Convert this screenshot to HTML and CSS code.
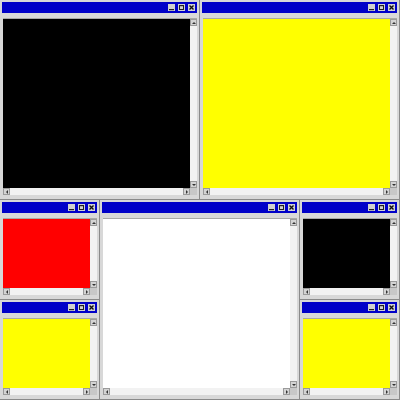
FILE: index.html
```html
<!DOCTYPE html>
<html>
<head>
<meta charset="utf-8">
<link rel="stylesheet" href="styles.css">
</head>
<body>
<div class="desk">
  <div class="win w-big a1">
    <div class="title"><span class="btn"><svg viewBox="0 0 7 7"><rect x="1" y="5" width="5" height="1.2" fill="#222"/></svg></span><span class="btn"><svg viewBox="0 0 7 7"><rect x="1.5" y="1.5" width="4" height="4" fill="none" stroke="#222" stroke-width="1"/><rect x="1" y="1" width="5" height="1.2" fill="#222"/></svg></span><span class="btn"><svg viewBox="0 0 7 7"><path d="M1.5 1.5L5.5 5.5M5.5 1.5L1.5 5.5" stroke="#111" stroke-width="1.4"/></svg></span></div>
    <div class="client"><div class="view black"></div><div class="vs"><span class="arr up"></span><span class="arr dn"></span></div><div class="hs"><span class="arr lf"></span><span class="arr rt"></span></div><div class="corner"></div></div>
  </div>
  <div class="win w-big a2">
    <div class="title"><span class="btn"><svg viewBox="0 0 7 7"><rect x="1" y="5" width="5" height="1.2" fill="#222"/></svg></span><span class="btn"><svg viewBox="0 0 7 7"><rect x="1.5" y="1.5" width="4" height="4" fill="none" stroke="#222" stroke-width="1"/><rect x="1" y="1" width="5" height="1.2" fill="#222"/></svg></span><span class="btn"><svg viewBox="0 0 7 7"><path d="M1.5 1.5L5.5 5.5M5.5 1.5L1.5 5.5" stroke="#111" stroke-width="1.4"/></svg></span></div>
    <div class="client"><div class="view yellow"></div><div class="vs"><span class="arr up"></span><span class="arr dn"></span></div><div class="hs"><span class="arr lf"></span><span class="arr rt"></span></div><div class="corner"></div></div>
  </div>
  <div class="win w-small a3">
    <div class="title"><span class="btn"><svg viewBox="0 0 7 7"><rect x="1" y="5" width="5" height="1.2" fill="#222"/></svg></span><span class="btn"><svg viewBox="0 0 7 7"><rect x="1.5" y="1.5" width="4" height="4" fill="none" stroke="#222" stroke-width="1"/><rect x="1" y="1" width="5" height="1.2" fill="#222"/></svg></span><span class="btn"><svg viewBox="0 0 7 7"><path d="M1.5 1.5L5.5 5.5M5.5 1.5L1.5 5.5" stroke="#111" stroke-width="1.4"/></svg></span></div>
    <div class="client"><div class="view red"></div><div class="vs"><span class="arr up"></span><span class="arr dn"></span></div><div class="hs"><span class="arr lf"></span><span class="arr rt"></span></div><div class="corner"></div></div>
  </div>
  <div class="win w-small a4">
    <div class="title"><span class="btn"><svg viewBox="0 0 7 7"><rect x="1" y="5" width="5" height="1.2" fill="#222"/></svg></span><span class="btn"><svg viewBox="0 0 7 7"><rect x="1.5" y="1.5" width="4" height="4" fill="none" stroke="#222" stroke-width="1"/><rect x="1" y="1" width="5" height="1.2" fill="#222"/></svg></span><span class="btn"><svg viewBox="0 0 7 7"><path d="M1.5 1.5L5.5 5.5M5.5 1.5L1.5 5.5" stroke="#111" stroke-width="1.4"/></svg></span></div>
    <div class="client"><div class="view yellow"></div><div class="vs"><span class="arr up"></span><span class="arr dn"></span></div><div class="hs"><span class="arr lf"></span><span class="arr rt"></span></div><div class="corner"></div></div>
  </div>
  <div class="win w-big a5">
    <div class="title"><span class="btn"><svg viewBox="0 0 7 7"><rect x="1" y="5" width="5" height="1.2" fill="#222"/></svg></span><span class="btn"><svg viewBox="0 0 7 7"><rect x="1.5" y="1.5" width="4" height="4" fill="none" stroke="#222" stroke-width="1"/><rect x="1" y="1" width="5" height="1.2" fill="#222"/></svg></span><span class="btn"><svg viewBox="0 0 7 7"><path d="M1.5 1.5L5.5 5.5M5.5 1.5L1.5 5.5" stroke="#111" stroke-width="1.4"/></svg></span></div>
    <div class="client"><div class="view white"></div><div class="vs"><span class="arr up"></span><span class="arr dn"></span></div><div class="hs"><span class="arr lf"></span><span class="arr rt"></span></div><div class="corner"></div></div>
  </div>
  <div class="win w-small a6">
    <div class="title"><span class="btn"><svg viewBox="0 0 7 7"><rect x="1" y="5" width="5" height="1.2" fill="#222"/></svg></span><span class="btn"><svg viewBox="0 0 7 7"><rect x="1.5" y="1.5" width="4" height="4" fill="none" stroke="#222" stroke-width="1"/><rect x="1" y="1" width="5" height="1.2" fill="#222"/></svg></span><span class="btn"><svg viewBox="0 0 7 7"><path d="M1.5 1.5L5.5 5.5M5.5 1.5L1.5 5.5" stroke="#111" stroke-width="1.4"/></svg></span></div>
    <div class="client"><div class="view black"></div><div class="vs"><span class="arr up"></span><span class="arr dn"></span></div><div class="hs"><span class="arr lf"></span><span class="arr rt"></span></div><div class="corner"></div></div>
  </div>
  <div class="win w-small a7">
    <div class="title"><span class="btn"><svg viewBox="0 0 7 7"><rect x="1" y="5" width="5" height="1.2" fill="#222"/></svg></span><span class="btn"><svg viewBox="0 0 7 7"><rect x="1.5" y="1.5" width="4" height="4" fill="none" stroke="#222" stroke-width="1"/><rect x="1" y="1" width="5" height="1.2" fill="#222"/></svg></span><span class="btn"><svg viewBox="0 0 7 7"><path d="M1.5 1.5L5.5 5.5M5.5 1.5L1.5 5.5" stroke="#111" stroke-width="1.4"/></svg></span></div>
    <div class="client"><div class="view yellow"></div><div class="vs"><span class="arr up"></span><span class="arr dn"></span></div><div class="hs"><span class="arr lf"></span><span class="arr rt"></span></div><div class="corner"></div></div>
  </div>
</div>
</body>
</html>
```
FILE: styles.css
```css
html, body { margin: 0; padding: 0; background: #d4d4d4; }
.desk {
  width: 400px; height: 400px;
  display: grid;
  grid-template-columns: repeat(4, 100px);
  grid-template-rows: repeat(4, 100px);
}
.a1 { grid-column: 1 / 3; grid-row: 1 / 3; }
.a2 { grid-column: 3 / 5; grid-row: 1 / 3; }
.a3 { grid-column: 1 / 2; grid-row: 3 / 4; }
.a4 { grid-column: 1 / 2; grid-row: 4 / 5; }
.a5 { grid-column: 2 / 4; grid-row: 3 / 5; }
.a6 { grid-column: 4 / 5; grid-row: 3 / 4; }
.a7 { grid-column: 4 / 5; grid-row: 4 / 5; }

.win {
  box-sizing: border-box;
  background: #d8d8d8;
  border-right: 1px solid #8a8a8a;
  border-bottom: 1px solid #8a8a8a;
  padding: 2px 2px 4px 2px;
  display: flex;
  flex-direction: column;
  min-width: 0; min-height: 0;
}
.title {
  height: 11px;
  flex: none;
  box-sizing: border-box;
  background: #0000c8;
  display: flex;
  justify-content: flex-end;
  align-items: center;
  gap: 3px;
  padding-right: 2px;
}
.btn {
  width: 7px; height: 7px;
  background: #d0d0d0;
  display: block;
}
.btn svg { width: 7px; height: 7px; display: block; }
.client {
  flex: 1;
  margin-top: 5px;
  margin-left: 1px;
  border-top: 1px solid #a8a8a8;
  display: grid;
  grid-template-columns: 1fr 7px;
  grid-template-rows: 1fr 7px;
  min-height: 0;
}
.view { min-width: 0; min-height: 0; }
.black { background: #000; }
.yellow { background: #ffff00; }
.red { background: #ff0000; }
.white { background: #ffffff; }
.vs {
  background: #f2f2f2;
  display: flex; flex-direction: column; justify-content: space-between;
}
.hs {
  background: #f2f2f2;
  display: flex; justify-content: space-between;
}
.corner { background: #c8c8c8; }
.arr {
  width: 7px; height: 7px;
  box-sizing: border-box;
  background: #d4d4d4;
  border: 1px solid #9a9a9a;
  position: relative;
  display: block;
}
.arr::after {
  content: "";
  position: absolute;
  left: 50%; top: 50%;
  width: 0; height: 0;
  border: 2px solid transparent;
  transform: translate(-50%, -50%);
}
.up::after { border-bottom-color: #333; border-top-width: 0; }
.dn::after { border-top-color: #333; border-bottom-width: 0; }
.lf::after { border-right-color: #333; border-left-width: 0; }
.rt::after { border-left-color: #333; border-right-width: 0; }
```
